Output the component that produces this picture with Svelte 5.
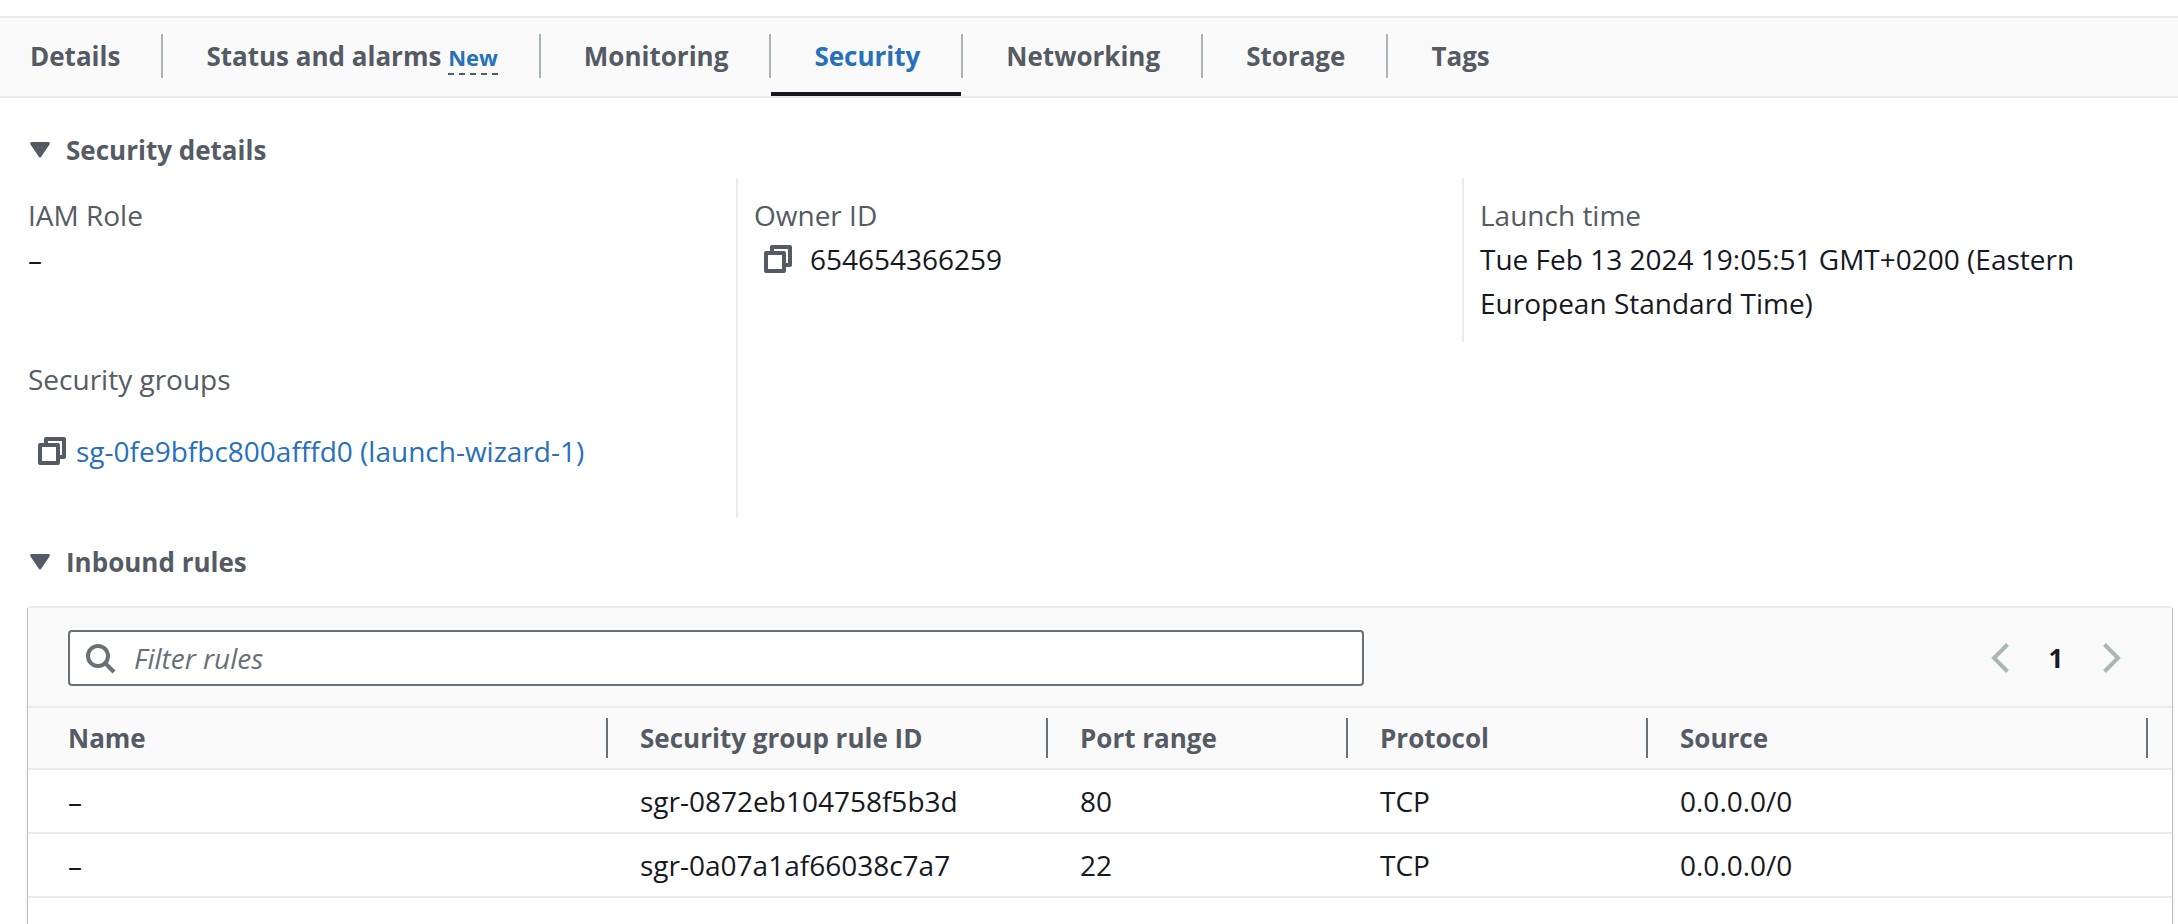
<script>
  const tabs = ['Details', 'Status and alarms', 'Monitoring', 'Security', 'Networking', 'Storage', 'Tags'];
  let active = $state('Security');
  let detailsOpen = $state(true);
  let inboundOpen = $state(true);
  let filter = $state('');

  const columns = ['Name', 'Security group rule ID', 'Port range', 'Protocol', 'Source'];
  const rules = [
    ['–', 'sgr-0872eb104758f5b3d', '80', 'TCP', '0.0.0.0/0'],
    ['–', 'sgr-0a07a1af66038c7a7', '22', 'TCP', '0.0.0.0/0']
  ];
  let shown = $derived(rules.filter((r) => r.join(' ').toLowerCase().includes(filter.toLowerCase())));
</script>

{#snippet copyIcon()}
  <svg viewBox="0 0 32 32" width="32" height="32" fill="none" stroke="currentColor" stroke-width="4" stroke-linejoin="round" aria-hidden="true">
    <path d="M4 10H22V28H4Z" />
    <path d="M10 9V4H28V22H23" />
  </svg>
{/snippet}

{#snippet caret()}
  <svg viewBox="0 0 20 16" width="20" height="16" aria-hidden="true">
    <path d="M1.5 0H18.500Q20.500 0.500 19.500 2.500L11 15Q10 16.500 9 15L0.500 2.500Q-0.500 0.500 1.500 0Z" fill="currentColor" />
  </svg>
{/snippet}

<div class="page">
  <nav class="tabs" aria-label="Instance sections">
    {#each tabs as tab}
      <button class="tab" class:active={active === tab} onclick={() => (active = tab)}>
        <span class="tab-text">{tab}{#if tab === 'Status and alarms'}{' '}<span class="new">New</span>{/if}</span>
      </button>
    {/each}
  </nav>

  <section>
    <h2><button class="toggle" aria-expanded={detailsOpen} onclick={() => (detailsOpen = !detailsOpen)}>{@render caret()}Security details</button></h2>
    {#if detailsOpen}
      <dl class="details">
        <div class="cell">
          <dt>IAM Role</dt>
          <dd>–</dd>
        </div>
        <div class="cell divided">
          <dt>Owner ID</dt>
          <dd class="owner"><button class="copy" aria-label="Copy owner ID">{@render copyIcon()}</button>654654366259</dd>
        </div>
        <div class="cell divided">
          <dt>Launch time</dt>
          <dd>Tue Feb 13 2024 19:05:51 GMT+0200 (Eastern European Standard Time)</dd>
        </div>
        <div class="cell">
          <dt>Security groups</dt>
          <dd class="group"><button class="copy" aria-label="Copy security group">{@render copyIcon()}</button><a href="#sg">sg-0fe9bfbc800afffd0 (launch-wizard-1)</a></dd>
        </div>
        <div class="cell divided"></div>
      </dl>
    {/if}
  </section>

  <section class="inbound">
    <h2><button class="toggle" aria-expanded={inboundOpen} onclick={() => (inboundOpen = !inboundOpen)}>{@render caret()}Inbound rules</button></h2>
    {#if inboundOpen}
      <div class="panel">
        <div class="toolbar">
          <label class="search">
            <svg viewBox="0 0 32 32" width="32" height="32" fill="none" stroke="currentColor" stroke-width="4" aria-hidden="true">
              <circle cx="14" cy="14" r="10" />
              <path d="M21 21L30 30" />
            </svg>
            <input type="text" placeholder="Filter rules" aria-label="Filter rules" bind:value={filter} />
          </label>
          <div class="pager">
            <button class="arrow" aria-label="Previous page" disabled>
              <svg viewBox="0 0 32 32" width="32" height="32" fill="none" stroke="currentColor" stroke-width="4" aria-hidden="true"><path d="M23.500 2.500L10 16L23.500 29.500" /></svg>
            </button>
            <button class="current">1</button>
            <button class="arrow" aria-label="Next page" disabled>
              <svg viewBox="0 0 32 32" width="32" height="32" fill="none" stroke="currentColor" stroke-width="4" aria-hidden="true"><path d="M8.500 2.500L22 16L8.500 29.500" /></svg>
            </button>
          </div>
        </div>
        <table>
          <colgroup>
            <col class="w-name" /><col class="w-id" /><col class="w-mid" /><col class="w-mid" /><col class="w-source" /><col />
          </colgroup>
          <thead>
            <tr>
              {#each columns as c}<th scope="col"><span>{c}</span></th>{/each}
              <td></td>
            </tr>
          </thead>
          <tbody>
            {#each shown as row}
              <tr>{#each row as value}<td>{value}</td>{/each}<td></td></tr>
            {/each}
          </tbody>
        </table>
      </div>
    {/if}
  </section>
</div>

<style>
  :global(body) {
    background: #fff;
    overflow: hidden;
  }
  .page {
    padding-top: 16px;
    height: 100vh;
    box-sizing: border-box;
    display: flex;
    flex-direction: column;
    font: 28px/44px "Open Sans", "Noto Sans", sans-serif;
    color: #16191f;
  }
  button, input {
    font: inherit;
    color: inherit;
    background: none;
    border: 0;
    padding: 0;
    margin: 0;
  }
  button:enabled { cursor: pointer; }
  svg { display: block; flex: none; }

  .tabs {
    display: flex;
    flex: none;
    background: #fafafa;
    border-top: 2px solid #ebebeb;
    border-bottom: 2px solid #ebebeb;
    color: #545b64;
    font-size: 26px;
    font-weight: 700;
  }
  .tab {
    display: flex;
    padding: 16px 0 14px;
    border-bottom: 4px solid transparent;
    margin-right: 2px;
  }
  .tab-text {
    padding: 0 41px 0 43px;
    height: 44px;
    line-height: 44px;
    border-right: 2px solid #aab7b8;
    margin-right: -2px;
    white-space: nowrap;
  }
  .tab:first-child .tab-text { padding-left: 30px; }
  .tab:last-child .tab-text { border-right-color: transparent; }
  .tab.active { color: #2770bb; border-bottom-color: #16191f; }
  .new {
    display: inline-block;
    font-size: 22px;
    line-height: 32px;
    color: #2770bb;
    border-bottom: 2px dashed #545b64;
  }

  h2 { margin: 0; font-size: 26px; line-height: 44px; font-weight: 700; color: #545b64; }
  .toggle { display: flex; align-items: center; gap: 16px; padding-left: 30px; }
  section { padding-top: 30px; flex: none; }

  .details {
    display: grid;
    grid-template-columns: 727fr 726fr 716fr;
    margin: 0;
    padding: 6px 0 0 9px;
  }
  .cell { padding: 15px 18px 17px 19px; }
  .divided { border-left: 2px solid #ebebeb; padding-left: 16px; }
  dt { color: #545b64; }
  dd { margin: 0; font-weight: 500; }
  .owner, .group { display: flex; align-items: center; }
  .owner { gap: 16px; padding-left: 8px; }
  .group { gap: 8px; padding: 28px 0 28px 8px; }
  .copy { color: #545b64; }
  a { color: #2770bb; text-decoration: none; }

  .inbound {
    flex: 1;
    min-height: 0;
    padding-top: 22px;
    display: flex;
    flex-direction: column;
  }
  .panel {
    flex: 1;
    margin: 22px 6px 0 28px;
    border-top: 2px solid #ebebeb;
    box-shadow: -1px 2px 1px #b9bfc3, 1px 2px 1px #b9bfc3;
    background: #fff;
  }
  .toolbar {
    display: flex;
    justify-content: space-between;
    align-items: center;
    padding: 22px 44px 20px 40px;
    background: #fafafa;
    border-bottom: 2px solid #ebebeb;
  }
  .search {
    display: flex;
    align-items: center;
    gap: 18px;
    flex: 0 1 1296px;
    box-sizing: border-box;
    height: 56px;
    padding: 0 14px;
    border: 2px solid #687078;
    border-radius: 4px;
    background: #fff;
    color: #687078;
  }
  .search input { flex: 1; min-width: 0; outline: 0; color: #16191f; }
  .search input::placeholder { color: #687078; font-style: italic; opacity: 1; }
  .pager { display: flex; align-items: center; }
  .arrow { color: #aab7b8; }
  .current { width: 80px; font-size: 26px; font-weight: 700; }

  table { width: 100%; table-layout: fixed; border-collapse: separate; border-spacing: 0; }
  .w-name { width: 580px; }
  .w-id { width: 440px; }
  .w-mid { width: 300px; }
  .w-source { width: 500px; }
  th, td { text-align: left; border-bottom: 2px solid #ebebeb; }
  thead th, thead td { padding: 10px 0; background: #fafafa; color: #545b64; }
  th span {
    display: block;
    font-size: 26px;
    line-height: 40px;
    padding-left: 32px;
    border-right: 2px solid #687078;
    white-space: nowrap;
  }
  th:first-child span { padding-left: 40px; }
  tbody td { padding: 9px 0 9px 32px; font-weight: 500; }
  tbody td:first-child { padding-left: 40px; }
  tbody td:last-child { padding: 0; }
</style>
